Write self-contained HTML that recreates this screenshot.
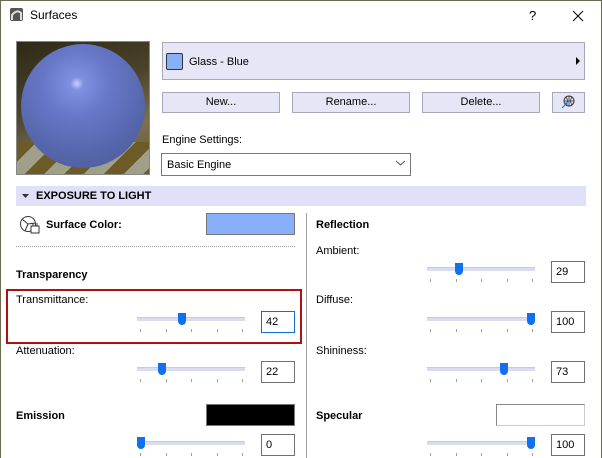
<!DOCTYPE html>
<html><head><style>
*{box-sizing:border-box;margin:0;padding:0}
body{width:602px;height:458px;background:#fff;position:relative;overflow:hidden;font-family:"Liberation Sans",sans-serif;font-size:11px;color:#000}
.a{position:absolute}
.btn{position:absolute;background:#e6e6f6;border:1px solid #a8a8b8;text-align:center;line-height:19px;font-size:11px}
.inp{position:absolute;width:34px;height:22px;border:1px solid #707070;background:#fff;line-height:20px;padding-left:4px;font-size:11px}
.track{position:absolute;height:4px;background:#dcdcf0;border-top:1px solid #c8c8e0}
.thumb{position:absolute;width:8px;height:12px;background:#1070f0;border-radius:0 0 4px 4px}
.tick{position:absolute;width:1px;height:3px;background:#a0a0a0}
.b{font-weight:bold}
</style></head><body>
<div class="a" style="left:0;top:0;width:602px;height:1px;background:#6b6b50"></div>
<div class="a" style="left:0;top:0;width:1px;height:458px;background:#6b6b50"></div>
<div class="a" style="left:601px;top:0;width:1px;height:458px;background:#6b6b50"></div>
<svg class="a" style="left:9px;top:7px" width="16" height="15"><rect x="1" y="1" width="13" height="13" rx="2" fill="#555"/><path d="M3 13 L3 8 Q8 2 12 6 L12 13" stroke="#ddd" stroke-width="2" fill="none"/></svg>
<div class="a" style="left:30px;top:8px;font-size:12px">Surfaces</div>
<div class="a" style="left:529px;top:8px;font-size:13px">?</div>
<svg class="a" style="left:572px;top:10px" width="12" height="12"><path d="M1 1L11 11M11 1L1 11" stroke="#000" stroke-width="1"/></svg>

<div class="a" style="left:16px;top:41px;width:134px;height:134px;border:1px solid #888;overflow:hidden;background:
linear-gradient(160deg,#2e2a18 0%,#4a4228 40%,#7a7050 70%,#6a5a30 100%)">
<div class="a" style="left:0;top:100px;width:134px;height:34px;background:repeating-linear-gradient(135deg,#6c5a28 0 14px,#a0a088 14px 28px)"></div>
<div class="a" style="left:4px;top:2px;width:124px;height:124px;border-radius:50%;background:radial-gradient(circle at 45% 32%,#c8d0ff 0,#8090e0 6%,#6878c8 30%,#5868b0 60%,#485890 100%)"></div>
</div>

<div class="a" style="left:162px;top:42px;width:423px;height:38px;background:#e6e6f6;border:1px solid #a8a8b8"></div>
<div class="a" style="left:166px;top:53px;width:17px;height:17px;background:#88b0f8;border:1px solid #333;border-radius:2px"></div>
<div class="a" style="left:189px;top:56px">Glass - Blue</div>
<svg class="a" style="left:576px;top:57px" width="5" height="8"><path d="M0 0L4 4L0 8Z" fill="#000"/></svg>

<div class="btn" style="left:162px;top:92px;width:118px;height:21px">New...</div>
<div class="btn" style="left:292px;top:92px;width:118px;height:21px">Rename...</div>
<div class="btn" style="left:422px;top:92px;width:118px;height:21px">Delete...</div>
<div class="btn" style="left:552px;top:92px;width:33px;height:21px"></div>
<svg class="a" style="left:561px;top:95px" width="14" height="14"><circle cx="8" cy="6" r="5" fill="none" stroke="#333"/><path d="M3 6H13M8 1V11M5 2Q8 6 5 10M11 2Q8 6 11 10" stroke="#333" fill="none" stroke-width=".8"/><path d="M1 13L6 8M3 8H6V11" stroke="#1070f0" fill="none"/></svg>

<div class="a" style="left:162px;top:134px">Engine Settings:</div>
<div class="a" style="left:161px;top:153px;width:250px;height:23px;border:1px solid #7a7a7a;background:#fff;padding:5px 0 0 5px">Basic Engine</div>
<svg class="a" style="left:396px;top:160px" width="9" height="6"><path d="M0 1L4.5 5L9 1" stroke="#555" fill="none"/></svg>

<div class="a" style="left:16px;top:186px;width:570px;height:20px;background:#e0e0f8"></div>
<svg class="a" style="left:22px;top:194px" width="7" height="5"><path d="M0 0H7L3.5 4Z" fill="#333"/></svg>
<div class="a b" style="left:36px;top:190px">EXPOSURE TO LIGHT</div>

<div class="a" style="left:306px;top:213px;width:1px;height:245px;background:#a0a0a0"></div>

<svg class="a" style="left:19px;top:215px" width="22" height="20"><circle cx="9" cy="9" r="7.5" fill="none" stroke="#333"/><path d="M9 9L3 4M9 9L16 8M9 9L6 16" stroke="#333"/><rect x="12" y="11" width="8" height="7" fill="#fff" stroke="#333"/><path d="M14 8V11M18 8V11" stroke="#333"/></svg>
<div class="a b" style="left:46px;top:219px">Surface Color:</div>
<div class="a" style="left:206px;top:213px;width:89px;height:22px;background:#88b0f8;border:1px solid #777"></div>
<div class="a" style="left:16px;top:246px;width:279px;height:1px;border-top:1px dotted #999"></div>

<div class="a b" style="left:16px;top:269px">Transparency</div>
<div class="a" style="left:6px;top:289px;width:296px;height:55px;border:2px solid #b01010"></div>
<div class="a" style="left:16px;top:294px">Transmittance:</div>
<div class="a" style="left:16px;top:345px">Attenuation:</div>
<div class="a b" style="left:16px;top:410px">Emission</div>
<div class="a" style="left:206px;top:404px;width:89px;height:22px;background:#000;border:1px solid #777"></div>

<div class="a b" style="left:316px;top:219px">Reflection</div>
<div class="a" style="left:316px;top:245px">Ambient:</div>
<div class="a" style="left:316px;top:294px">Diffuse:</div>
<div class="a" style="left:316px;top:345px">Shininess:</div>
<div class="a b" style="left:316px;top:410px">Specular</div>
<div class="a" style="left:496px;top:404px;width:89px;height:22px;background:#fff;border:1px solid #888;border-right-color:#ccc;border-bottom-color:#ccc"></div>

<div id="s"></div>
<script>
var sl=[[137,319,182,261,311,"42"],[137,369,162,261,361,"22"],[137,443,141,261,434,"0"],[427,269,459,551,261,"29"],[427,319,531,551,311,"100"],[427,369,504,551,361,"73"],[427,443,531,551,434,"100"]];
var h="";
sl.forEach(function(s,i){
h+='<div class="track" style="left:'+s[0]+'px;top:'+(s[1]-2)+'px;width:108px"></div>';
h+='<div class="thumb" style="left:'+(s[2]-4)+'px;top:'+(s[1]-6)+'px"></div>';
for(var k=0;k<5;k++)h+='<div class="tick" style="left:'+(s[0]+3+k*25.5)+'px;top:'+(s[1]+10)+'px"></div>';
h+='<div class="inp" style="left:'+s[3]+'px;top:'+s[4]+'px;'+(i==0?'border-color:#1070d0;':'')+'">'+s[5]+'</div>';
});
document.getElementById("s").innerHTML=h;
</script>
</body></html>
